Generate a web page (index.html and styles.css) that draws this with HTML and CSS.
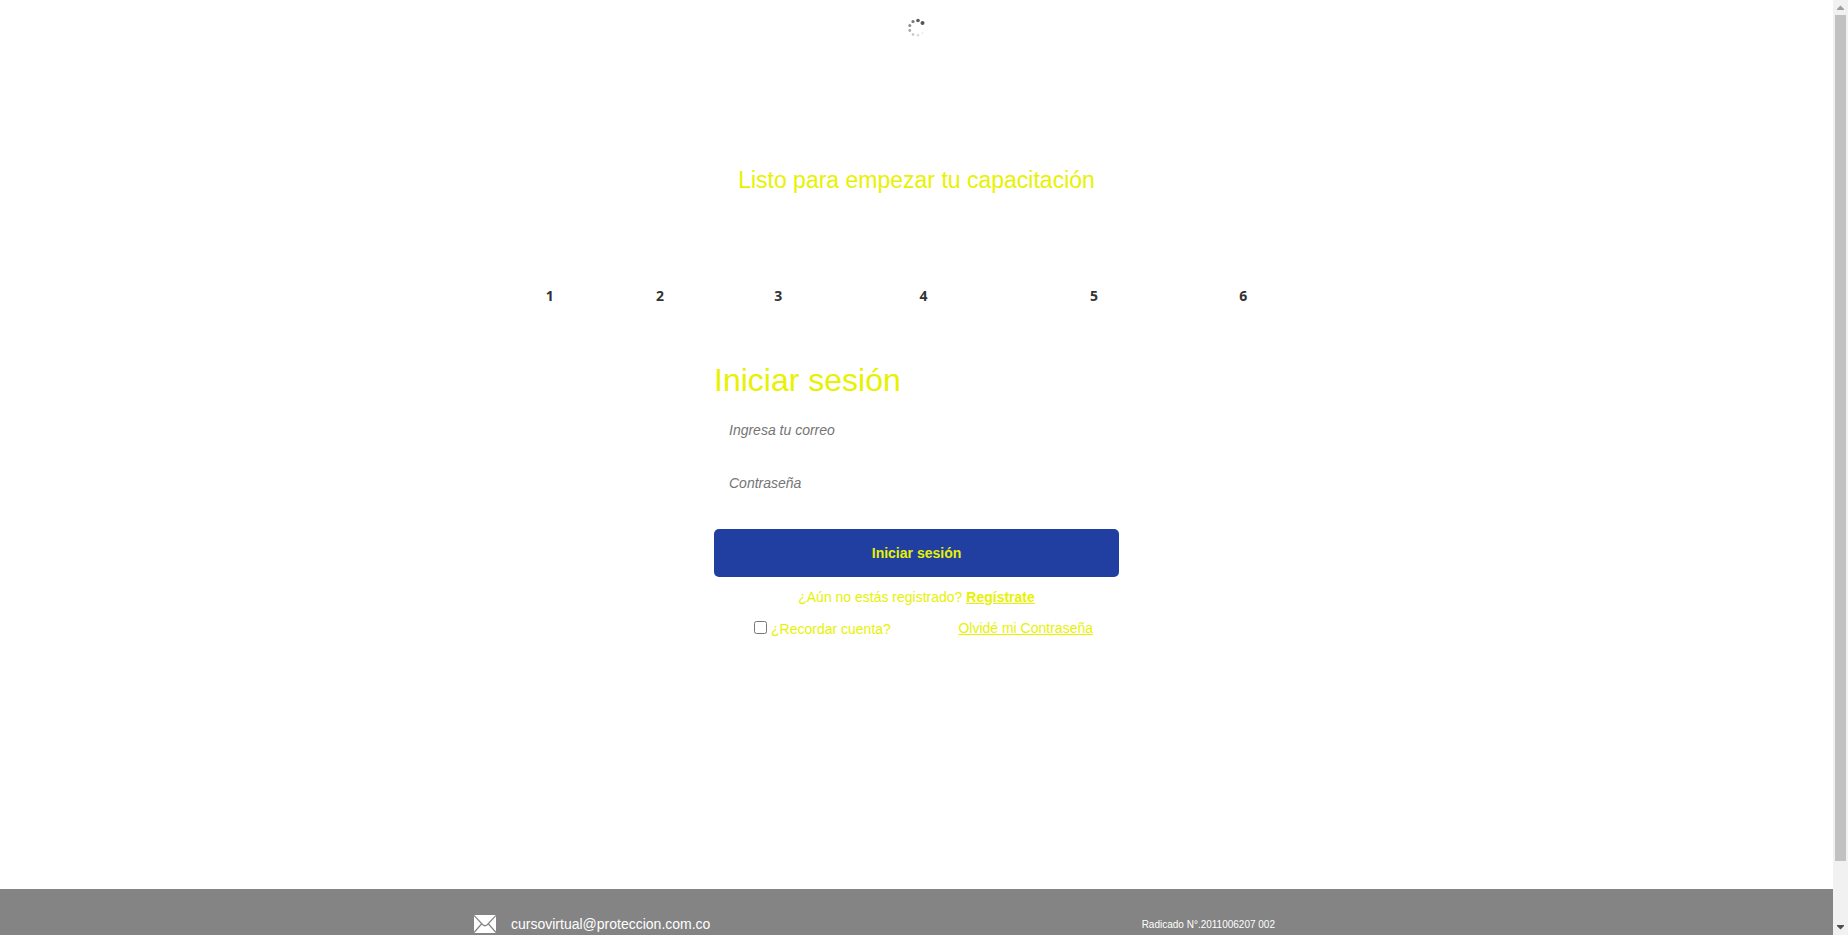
FILE: index.html
```html
<!DOCTYPE html>
<html lang="es">
<head>
<meta charset="utf-8">
<title>Iniciar sesión</title>
<link rel="stylesheet" href="styles.css">
</head>
<body>
<div class="window">
  <div class="page">
    <main class="content">
      <svg class="spinner" viewBox="0 0 20 20" aria-hidden="true">
        <circle cx="15.5" cy="5" r="2" fill="#555"/>
        <circle cx="11" cy="2.5" r="1.8" fill="#5c5c5c"/>
        <circle cx="6" cy="3.5" r="1.6" fill="#777"/>
        <circle cx="2.8" cy="7.5" r="1.5" fill="#8c8c8c"/>
        <circle cx="2.8" cy="12.5" r="1.4" fill="#a8a8a8"/>
        <circle cx="6" cy="16.5" r="1.3" fill="#c4c4c4"/>
        <circle cx="11" cy="17.3" r="1.2" fill="#d8d8d8"/>
        <circle cx="15.5" cy="15" r="1" fill="#ececec"/>
      </svg>
      <h2 class="tagline">Listo para empezar tu capacitación</h2>
      <ol class="steps">
        <li>1</li><li>2</li><li>3</li><li>4</li><li>5</li><li>6</li>
      </ol>
      <form class="login">
        <h1 class="login-title">Iniciar sesión</h1>
        <input class="field" type="email" placeholder="Ingresa tu correo" aria-label="Ingresa tu correo">
        <input class="field" type="password" placeholder="Contraseña" aria-label="Contraseña">
        <button class="submit" type="submit">Iniciar sesión</button>
        <p class="register">¿Aún no estás registrado? <a href="#registro"><b>Regístrate</b></a></p>
        <div class="options">
          <div class="remember">
            <input class="check" type="checkbox" id="recordar">
            <label for="recordar">¿Recordar cuenta?</label>
          </div>
          <a class="forgot" href="#olvide">Olvidé mi Contraseña</a>
        </div>
      </form>
    </main>
    <footer class="footer">
      <div class="footer-inner">
        <svg class="mail" viewBox="0 0 22 18" aria-hidden="true">
          <rect width="22" height="18" fill="#fff"/>
          <path d="M0 0.5 8.5 9.5Q11 12 13.5 9.5L22 0.5M0 17.5 7.5 9M22 17.5 14.5 9" fill="none" stroke="#848484" stroke-width="1.2"/>
        </svg>
        <span class="email">cursovirtual@proteccion.com.co</span>
        <small class="filing">Radicado N°.2011006207 002</small>
      </div>
    </footer>
  </div>
  <div class="scrollbar" aria-hidden="true">
    <svg class="arrow" viewBox="0 0 15 15"><path d="M4 10V9L7.5 5.5 11 9V10Z" fill="#a0a0a0"/></svg>
    <div class="track"><div class="thumb"></div></div>
    <svg class="arrow" viewBox="0 0 15 15"><path d="M4 5V6L7.5 9.5 11 6V5Z" fill="#505050"/></svg>
  </div>
</div>
</body>
</html>
```
FILE: styles.css
```css
* { box-sizing: border-box; }

body {
  margin: 0;
  background: #fff;
  color: #e7f200;
  font: 14px/20px "Liberation Sans", Arial, sans-serif;
}

a { color: inherit; text-decoration: underline; }

.window { display: flex; height: 100vh; overflow: hidden; }

.page {
  flex: 1;
  display: flex;
  flex-direction: column;
  overflow: hidden;
}

.content {
  flex: 1;
  display: flex;
  flex-direction: column;
  align-items: center;
}

.spinner {
  width: 20px;
  height: 20px;
  margin-top: 18px;
  overflow: visible;
}

.tagline {
  margin: 128px 0 0;
  font-size: 23px;
  line-height: 28px;
  font-weight: 400;
}

.steps {
  display: grid;
  grid-template-columns: 110fr 110fr 126fr 164fr 176fr 122fr;
  width: 100%;
  max-width: 844px;
  margin: 92px 0 0;
  padding: 0 34px 0 0;
  list-style: none;
  text-align: center;
  color: #333;
  font: 700 14px/20px "Noto Sans", "Open Sans", sans-serif;
}

.login {
  display: flex;
  flex-direction: column;
  width: 100%;
  max-width: 405px;
  margin-top: 56px;
}

.login-title {
  margin: 0 0 15px;
  font-size: 32px;
  line-height: 36px;
  font-weight: 400;
}

.field {
  height: 34px;
  margin-bottom: 19px;
  padding: 0 15px;
  border: 0;
  outline: 0;
  background: #fff;
  color: #555;
  font: italic 14px/20px "Liberation Sans", Arial, sans-serif;
}

.field::placeholder { color: #757575; }

.submit {
  height: 48px;
  margin-top: 10px;
  border: 0;
  border-radius: 5px;
  background: #213fa1;
  color: #e7f200;
  font: 700 14px/20px "Liberation Sans", Arial, sans-serif;
}

.register { margin: 10px 0 0; text-align: center; }

.options {
  display: flex;
  justify-content: space-between;
  margin-top: 11px;
  padding: 0 26px 0 40px;
}

.remember { display: flex; gap: 4px; padding-top: 1px; }

.check { width: 13px; height: 13px; margin: 2px 0 0; }

.footer {
  height: 46px;
  background: #848484;
  color: #fff;
}

.footer-inner {
  display: flex;
  align-items: center;
  width: 100%;
  max-width: 885px;
  margin: 0 auto;
  padding-top: 24px;
}

.mail { width: 22px; height: 18px; margin-right: 15px; }

.filing { margin: 0 84px 0 auto; padding-top: 2px; font-size: 10px; }

.scrollbar {
  display: flex;
  flex-direction: column;
  width: 15px;
  background: #f1f1f1;
}

.arrow { width: 15px; height: 15px; }

.track { flex: 1; padding: 0 2px; }

.thumb { height: 93.5%; background: #c1c1c1; }
```
